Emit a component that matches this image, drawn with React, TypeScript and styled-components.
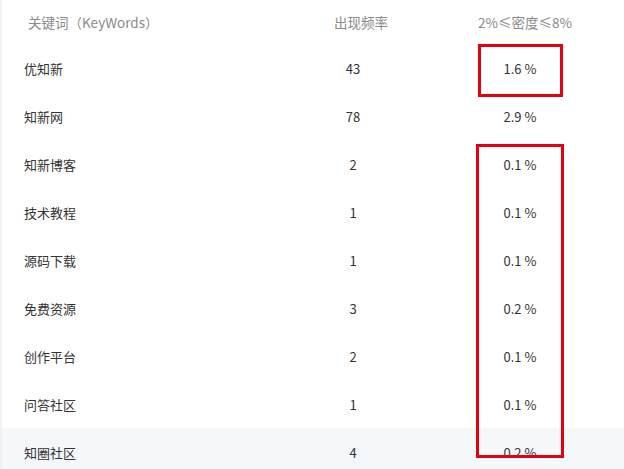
import React from "react";
import styled, { createGlobalStyle } from "styled-components";

const Global = createGlobalStyle`
  html, body { margin: 0; padding: 0; background: #fff; }
  body { font-family: "Noto Sans CJK SC", "Noto Sans", sans-serif; }
`;

const Page = styled.div`
  position: relative;
  width: 624px;
  height: 469px;
  overflow: hidden;
  border-left: 2px solid #f2f2f2;
  box-sizing: border-box;
`;

const Grid = styled.div`
  display: grid;
  grid-template-columns: 264px 174px 184px;
`;

const HeadCell = styled.div<{ $align: "left" | "center"; $offset: number; $right?: number }>`
  height: 44px;
  display: flex;
  align-items: center;
  justify-content: ${(p) => (p.$align === "left" ? "flex-start" : "center")};
  padding-left: ${(p) => p.$offset}px;
  padding-right: ${(p) => p.$right ?? 0}px;
  font-size: 13.5px;
  color: #8a8a8a;
  white-space: nowrap;
`;

const Row = styled.div<{ $hl?: boolean }>`
  display: contents;
  & > div {
    background: ${(p) => (p.$hl ? "#f5f8fb" : "transparent")};
  }
`;

const Cell = styled.div<{ $align: "left" | "center"; $right?: number }>`
  height: 48px;
  display: flex;
  align-items: center;
  justify-content: ${(p) => (p.$align === "left" ? "flex-start" : "center")};
  padding-left: ${(p) => (p.$align === "left" ? "22px" : "0")};
  padding-right: ${(p) => p.$right ?? 0}px;
  font-size: 13px;
  color: #333;
  white-space: nowrap;
`;

const Mark = styled.div<{ $l: number; $t: number; $w: number; $h: number }>`
  position: absolute;
  left: ${(p) => p.$l}px;
  top: ${(p) => p.$t}px;
  width: ${(p) => p.$w}px;
  height: ${(p) => p.$h}px;
  border: 3px solid #e5000f;
  box-sizing: border-box;
  pointer-events: none;
`;

const rows: [string, string, string][] = [
  ["优知新", "43", "1.6 %"],
  ["知新网", "78", "2.9 %"],
  ["知新博客", "2", "0.1 %"],
  ["技术教程", "1", "0.1 %"],
  ["源码下载", "1", "0.1 %"],
  ["免费资源", "3", "0.2 %"],
  ["创作平台", "2", "0.1 %"],
  ["问答社区", "1", "0.1 %"],
  ["知圈社区", "4", "0.2 %"],
];

export default function App() {
  return (
    <>
      <Global />
      <Page>
        <Grid>
          <HeadCell $align="left" $offset={26}>关键词（KeyWords）</HeadCell>
          <HeadCell $align="center" $offset={16}>出现频率</HeadCell>
          <HeadCell $align="center" $offset={10} $right={24}>2%≤密度≤8%</HeadCell>
          {rows.map((r, i) => (
            <Row key={i} $hl={i === rows.length - 1}>
              <Cell $align="left">{r[0]}</Cell>
              <Cell $align="center">{r[1]}</Cell>
              <Cell $align="center" $right={24}>{r[2]}</Cell>
            </Row>
          ))}
        </Grid>
        <Mark $l={476} $t={44} $w={85} $h={53} />
        <Mark $l={474} $t={144} $w={88} $h={314} />
      </Page>
    </>
  );
}
